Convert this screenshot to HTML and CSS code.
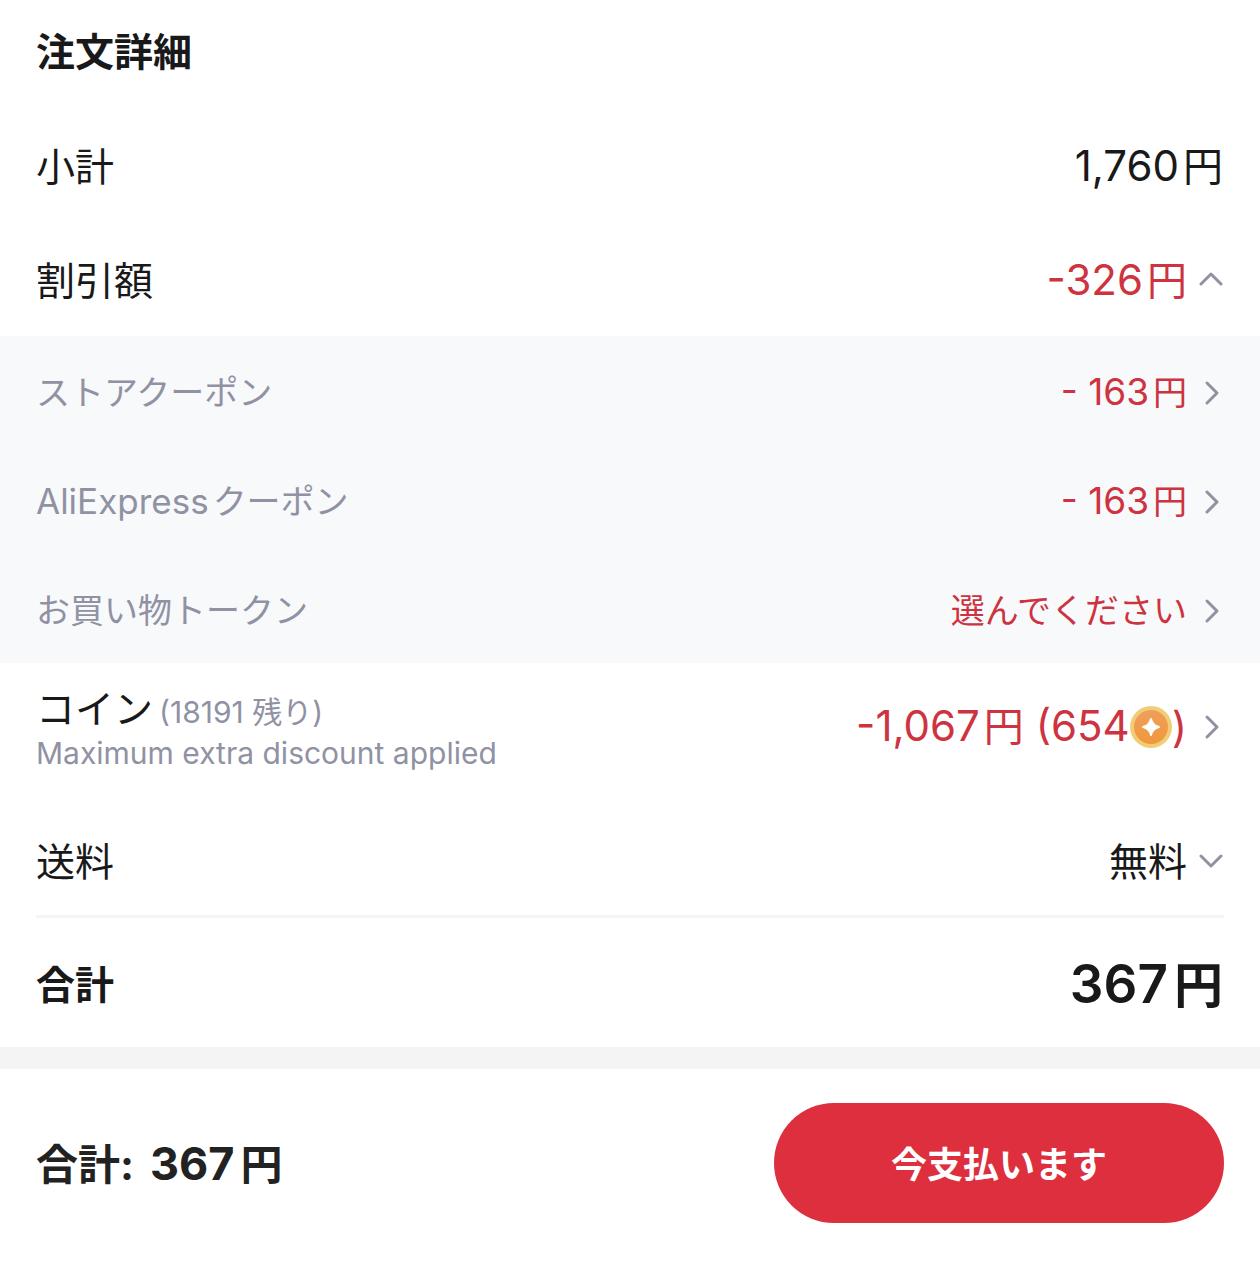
FILE: index.html
```html
<!DOCTYPE html>
<html lang="ja">
<head>
<meta charset="utf-8">
<meta name="viewport" content="width=device-width, initial-scale=1">
<title>注文詳細</title>
<link rel="stylesheet" href="styles.css">
</head>
<body>
<svg class="defs" aria-hidden="true">
  <symbol id="right" viewBox="0 0 24 26"><path d="M8 3 18 13 8 23"/></symbol>
  <symbol id="up" viewBox="0 0 24 26"><path d="M2 16 12 6 22 16"/></symbol>
  <symbol id="down" viewBox="0 0 24 26"><path d="M2 7 12 17 22 7"/></symbol>
</svg>
<main class="order">
  <h1 class="title">注文詳細</h1>
  <div class="row">
    <span>小計</span>
    <span class="price">1,760<span class="yen">円</span></span>
  </div>
  <div class="row">
    <span>割引額</span>
    <button class="action accent" type="button" aria-expanded="true"><span class="price">-326<span class="yen">円</span></span><svg class="chevron"><use href="#up"/></svg></button>
  </div>
  <section class="details">
    <div class="row">
      <span>ストアクーポン</span>
      <button class="action accent" type="button"><span class="price">- 163<span class="yen">円</span></span><svg class="chevron"><use href="#right"/></svg></button>
    </div>
    <div class="row">
      <span><span class="latin">AliExpress</span>クーポン</span>
      <button class="action accent" type="button"><span class="price">- 163<span class="yen">円</span></span><svg class="chevron"><use href="#right"/></svg></button>
    </div>
    <div class="row">
      <span>お買い物トークン</span>
      <button class="action accent" type="button"><span>選んでください</span><svg class="chevron"><use href="#right"/></svg></button>
    </div>
  </section>
  <div class="row coins">
    <div class="coin-label">
      <div class="coin-name">コイン<span class="note">(18191 残り)</span></div>
      <div class="note">Maximum extra discount applied</div>
    </div>
    <button class="action accent" type="button"><span class="price coin-price"><span>-1,067<span class="yen">円</span> (654</span><svg class="coin" viewBox="0 0 42 42" aria-hidden="true"><defs><linearGradient id="coinfill" x1="0" y1="0" x2="0" y2="1"><stop offset="0" stop-color="#ef9f5c"/><stop offset="1" stop-color="#f0983a"/></linearGradient></defs><circle cx="21" cy="21" r="21" fill="#f0cd76"/><circle cx="21" cy="21" r="17" fill="url(#coinfill)"/><path d="M21 13Q22.500 19.500 29 21 22.500 22.500 21 29 19.500 22.500 13 21 19.500 19.500 21 13Z" fill="#fff" stroke="#fff" stroke-width="2" stroke-linejoin="round"/></svg><span>)</span></span><svg class="chevron"><use href="#right"/></svg></button>
  </div>
  <div class="row">
    <span>送料</span>
    <button class="action" type="button" aria-expanded="false"><span>無料</span><svg class="chevron"><use href="#down"/></svg></button>
  </div>
  <hr class="divider">
  <div class="row total">
    <span>合計</span>
    <span class="price">367<span class="yen">円</span></span>
  </div>
</main>
<footer class="checkout">
  <div class="sum"><span>合計:</span><span class="price">367<span class="yen">円</span></span></div>
  <button class="pay" type="button">今支払います</button>
</footer>
</body>
</html>
```
FILE: styles.css
```css
* { box-sizing: border-box; }

body {
  margin: 0;
  background: #fff;
  color: #191919;
  font-family: Inter, "Noto Sans CJK JP", sans-serif;
  font-size: 39px;
  line-height: 48px;
}

button {
  padding: 0;
  border: 0;
  background: none;
  color: inherit;
  font: inherit;
  cursor: pointer;
}

.defs { position: absolute; width: 0; height: 0; }

.title {
  margin: 0;
  padding: 28px 36px 32px;
  font-size: 39px;
  font-weight: 700;
  line-height: 48px;
}

.row {
  display: flex;
  align-items: center;
  justify-content: space-between;
  min-height: 114px;
  padding: 3px 37px 0 36px;
}

.price { font-size: 42px; white-space: nowrap; }
.yen { margin-left: 4px; font-size: 40px; }

.action { display: flex; align-items: center; gap: 12px; }
.accent { color: #cd3340; }

.chevron {
  width: 24px;
  height: 26px;
  fill: none;
  stroke: #9092a3;
  stroke-width: 3;
  stroke-linecap: round;
  stroke-linejoin: round;
}

.details {
  background: #f8f9fb;
  color: #9092a3;
  font-size: 34px;
}
.details .row { min-height: 109px; padding-top: 4px; }
.details .price { font-size: 37px; }
.details .latin { margin-right: 4px; font-size: 35px; }
.details .yen { font-size: 34px; }

.coins { align-items: flex-start; min-height: 140px; padding-top: 22px; }
.coins .action { padding-top: 17px; }
.coin-name { line-height: 48px; }
.note { color: #9092a3; font-size: 30px; line-height: 40px; }
.coin-name .note { margin-left: 6px; }
.coin-price { display: flex; align-items: center; }
.coin { width: 42px; height: 42px; }

.divider {
  height: 3px;
  margin: -2px 36px 0;
  border: 0;
  background: #f4f4f4;
}

.total { min-height: 129px; padding-top: 4px; font-weight: 700; }
.total .price { font-size: 53px; font-weight: 600; }
.total .yen { margin-left: 6px; font-size: 49px; }

.checkout {
  display: flex;
  align-items: center;
  justify-content: space-between;
  padding: 34px 36px;
  border-top: 22px solid #f4f4f4;
  color: #222;
}
.sum {
  display: flex;
  align-items: baseline;
  gap: 16px;
  padding-top: 3px;
  font-size: 42px;
  font-weight: 700;
}
.sum .price { font-size: 45px; }
.sum .yen { margin-left: 6px; font-size: 42px; }

.pay {
  width: 450px;
  height: 120px;
  padding-top: 3px;
  border-radius: 60px;
  background: #dd2f3d;
  color: #fff;
  font-size: 36px;
  font-weight: 700;
}
```
